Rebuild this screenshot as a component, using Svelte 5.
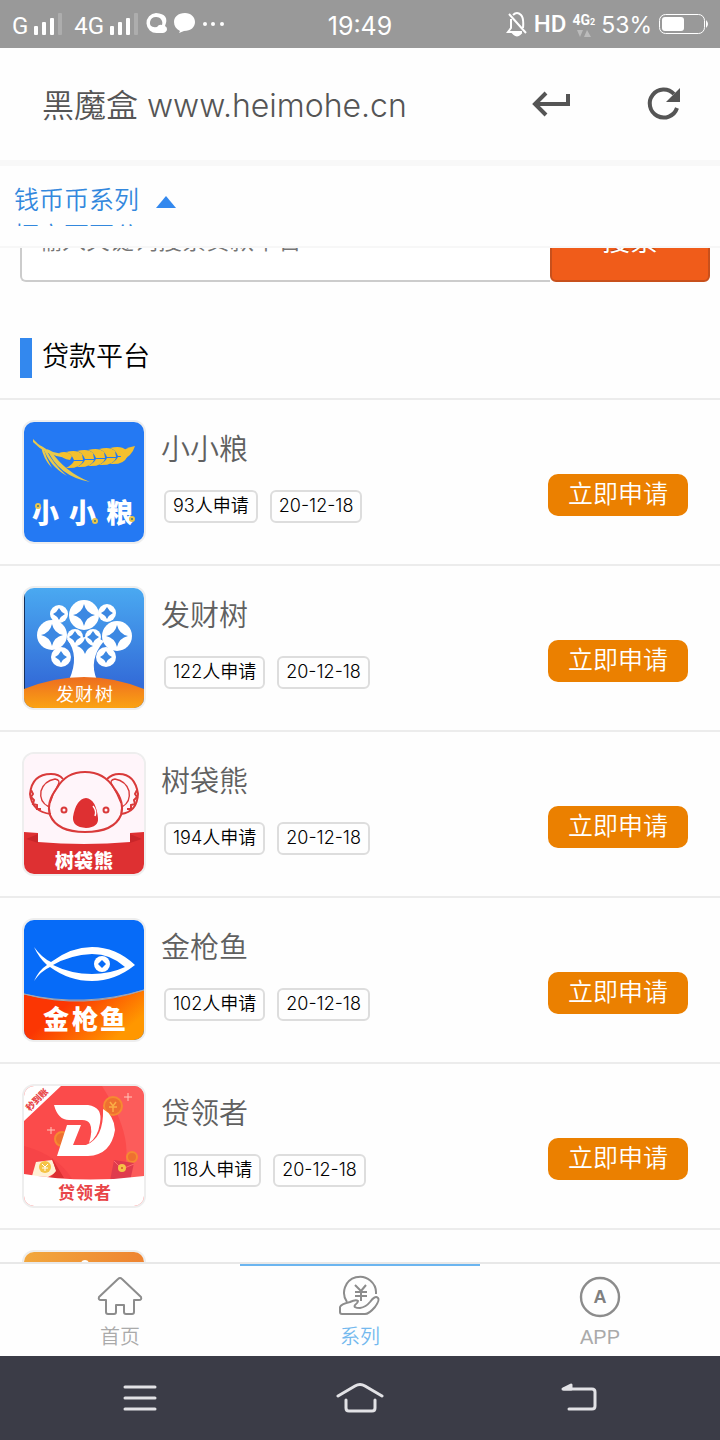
<script lang="ts">
  type Loan = { id: string; name: string; count: number; date: string };

  const loans: Loan[] = [
    { id: 'wheat', name: '小小粮', count: 93, date: '20-12-18' },
    { id: 'tree', name: '发财树', count: 122, date: '20-12-18' },
    { id: 'koala', name: '树袋熊', count: 194, date: '20-12-18' },
    { id: 'fish', name: '金枪鱼', count: 102, date: '20-12-18' },
    { id: 'leader', name: '贷领者', count: 118, date: '20-12-18' },
  ];

  const tabs = [
    { id: 'home', label: '首页' },
    { id: 'series', label: '系列' },
    { id: 'app', label: 'APP' },
  ];

  // x, y, radius, size of the hole
  const coins = [
    [60, 27, 15, 11],
    [35, 26, 9, 6],
    [83, 25, 9, 6],
    [28, 47, 15, 11],
    [93, 48, 15, 11],
    [37, 69, 10, 6],
    [82, 69, 10, 6],
    [51, 49, 8, 6],
    [69, 49, 8, 6],
    [61, 58, 9, 8],
  ];

  const grains = [0, 1, 2, 3, 4];

  let selectedTab = $state('series');
  let keyword = $state('');

  function diamond(x: number, y: number, s: number) {
    return `M${x} ${y - s}Q${x + 2} ${y - 2} ${x + s} ${y}Q${x + 2} ${y + 2} ${x} ${y + s}Q${x - 2} ${y + 2} ${x - s} ${y}Q${x - 2} ${y - 2} ${x} ${y - s}Z`;
  }
</script>

{#snippet signal()}
  <svg class="signal" viewBox="0 0 28 24" width="28" height="24" fill="#fff">
    <rect x="0" y="14" width="4" height="9" rx="1" />
    <rect x="8" y="10" width="4" height="13" rx="1" />
    <rect x="16" y="6" width="4" height="17" rx="1" />
    <rect x="24" y="1" width="4" height="22" rx="1" opacity="0.2" />
  </svg>
{/snippet}

{#snippet logo(id: string)}
  <svg class="logo" viewBox="0 0 120 120" width="120" height="120" aria-hidden="true">
    {#if id === 'wheat'}
      <rect width="120" height="120" fill="#2479f3" />
      <g fill="#e8c94c">
        <path d="M9 17Q19 29 38 32L42 36Q21 33 9 20Z" />
        <path d="M19 25Q25 44 43 54Q28 41 22 27Z" />
        <path d="M23 27Q34 54 66 60Q41 50 27 29Z" />
        <path d="M17 24Q19 37 28 46Q22 36 19 25Z" />
      </g>
      <g fill="#f3c02e">
        <path d="M35 31Q43 28 48 34L46 38Q38 37 35 31Z" />
        {#each grains as i}
          <path d="M0 0Q-3 -7 -8 -8Q3 -11 8 -6L9 0Z" transform="translate({50 + i * 11} {38 - i})" />
          <path d="M0 1H9Q6 9 -8 8Q-2 5 0 1Z" transform="translate({50 + i * 11} {38 - i})" />
        {/each}
        <path d="M96 32Q100 26 111 24Q108 34 98 38Z" />
      </g>
      <g class="heavy" font-size="27" fill="#fff">
        <text x="8" y="101">小</text>
        <text x="45" y="101">小</text>
        <text x="82" y="101">粮</text>
      </g>
      <g fill="#477" stroke="#e9c54b" stroke-width="2">
        <circle cx="14" cy="84" r="2" />
        <circle cx="71" cy="99" r="2" />
        <circle cx="108" cy="97" r="2" />
      </g>
    {:else if id === 'tree'}
      <defs>
        <linearGradient id="tree-sky" x2="0" y2="1">
          <stop stop-color="#4aa9f1" />
          <stop offset="0.8" stop-color="#336cd8" />
        </linearGradient>
        <linearGradient id="tree-hill" x2="0" y2="1">
          <stop stop-color="#ed6d20" />
          <stop offset="1" stop-color="#fba313" />
        </linearGradient>
      </defs>
      <rect width="120" height="120" fill="url(#tree-sky)" />
      <rect width="1" height="104" fill="#16315c" />
      <path d="M43 51L52 48Q54 58 61 60Q67 58 71 49L80 53Q64 72 73 92H45Q56 68 43 51Z" fill="#fff" />
      {#each coins as [x, y, r]}
        <circle cx={x} cy={y} {r} fill="#fff" />
      {/each}
      {#each coins as [x, y, , s]}
        <path d={diamond(x, y, s)} fill="#3c88e2" />
      {/each}
      <path d="M0 101Q60 77 120 101V120H0Z" fill="url(#tree-hill)" />
      <g class="regular" font-size="18" fill="#fff">
        <text x="32" y="113">发</text>
        <text x="51" y="113">财</text>
        <text x="71" y="113">树</text>
      </g>
    {:else if id === 'koala'}
      <rect width="120" height="120" fill="#fff5fa" />
      <g fill="none" stroke="#d93a3a" stroke-width="2">
        <path d="M27 60Q8 58 6 40Q8 20 27 20Q35 20 39 25" />
        <path d="M97 60Q113 58 114 40Q111 20 95 20Q88 20 83 25" />
        <path d="M25 53Q15 48 17 37Q20 27 31 25Q37 26 34 31Q29 39 26 49" stroke-width="1.4" />
        <path d="M98 53Q107 48 105 37Q102 27 91 25Q85 26 88 31Q93 39 97 49" stroke-width="1.4" />
        <path d="M61 18Q42 18 33 34Q22 48 26 61Q33 78 61 78Q90 78 97 61Q101 48 90 34Q80 18 61 18Z" />
        <path d="M7 36l2 4 -2 3 3 3 -1 4 4 1 0 4 4 0M113 36l-2 4 2 3 -3 3 1 4 -4 1 0 4 -4 0" />
        <circle cx="40" cy="56" r="2.5" />
        <circle cx="82" cy="56" r="2.5" />
      </g>
      <path d="M62 44Q72 45 74 64Q75 73 62 74Q48 73 49 63Q52 45 62 44Z" fill="#de3032" />
      <path d="M69 52Q73 57 71 62" fill="none" stroke="#fff" stroke-width="1.4" />
      <path d="M0 78L14 79V88Q60 92 106 88V79L120 78V120H0Z" fill="#de3032" />
      <path d="M14 80V89L2 85ZM106 80V89L118 85Z" fill="#c9262a" />
      <g class="heavy" font-size="19" fill="#fff">
        <text x="31" y="114">树</text>
        <text x="50" y="114">袋</text>
        <text x="70" y="114">熊</text>
      </g>
    {:else if id === 'fish'}
      <defs>
        <linearGradient id="fish-sea" x2="1" y2="0.5">
          <stop offset="0.4" stop-color="#fb3603" />
          <stop offset="1" stop-color="#ff9700" />
        </linearGradient>
      </defs>
      <rect width="120" height="120" fill="#066bf8" />
      <path d="M0 74Q60 90 120 70V120H0Z" fill="url(#fish-sea)" />
      <path d="M0 74Q60 90 120 70Q60 88 0 74Z" fill="none" stroke="#a6a5ad" />
      <path
        d="M10 27Q18 38 27 42Q47 27 68 27Q92 27 111 45Q91 61 68 61Q45 61 26 47Q17 51 10 61Q15 50 23 45Q15 38 10 27ZM29 45Q47 54 68 54Q86 54 101 47Q87 34 68 34Q46 35 29 45Z"
        fill="#fff"
        fill-rule="evenodd"
      />
      <circle cx="78" cy="44" r="8" fill="#fff" />
      <path d="M78 40L82 44L78 48L74 44Z" fill="#066bf8" />
      <g class="heavy" font-size="26" fill="#fff">
        <text x="19" y="109">金</text>
        <text x="48" y="109">枪</text>
        <text x="76" y="109">鱼</text>
      </g>
    {:else if id === 'leader'}
      <rect width="120" height="120" fill="#fb4b4b" />
      <path d="M78 0H120V100H90Q120 66 78 0Z" fill="#fc5c5b" />
      <path d="M0 60Q38 70 52 100H0Z" fill="#f64447" />
      <g fill="#ee7030" stroke="#f68a32" stroke-width="2">
        <circle cx="89" cy="20" r="9" />
        <circle cx="38" cy="53" r="7" />
        <circle cx="108" cy="71" r="5" />
      </g>
      <path d="M86 16l3 4 3 -4M85 21h8M89 20v6" stroke="#fbad45" stroke-width="1.5" fill="none" />
      <path d="M104 7v8M100 11h8M27 41v7M23 44h8" stroke="#ffc9bd" />
      <g fill="#fff">
        <path d="M30 19H64Q79 21 76 37Q74 51 65 57Q69 44 66 38Q64 34 58 34H45Q34 34 30 19Z" />
        <path d="M43 39H57L49 59H62Q80 52 79 23Q90 29 91 44Q87 69 64 70H33Z" />
      </g>
      <path d="M12 76L28 74L33 86L24 91L8 90Z" fill="#fff1d5" />
      <path d="M28 72L40 92H26L32 85Z" fill="#dc3032" />
      <circle cx="21" cy="81" r="6" fill="#f5c345" />
      <path d="M18 78l3 3 3 -3M18 82h6M21 81v4" stroke="#fff" fill="none" />
      <path d="M90 74L110 77L106 95H86Z" fill="#df3b4d" />
      <path d="M90 75L98 83L110 78" fill="none" stroke="#ff6870" />
      <circle cx="98" cy="82" r="4" fill="#f6c247" />
      <circle cx="98" cy="82" r="1" fill="#d6572d" />
      <path d="M0 88Q60 98 120 90V120H0ZM0 0H37L0 35Z" fill="#fff" />
      <text class="heavy" x="-14" y="22" font-size="9" fill="#e84548" transform="rotate(-45)">秒到账</text>
      <g class="bold" font-size="17" fill="#e84548">
        <text x="34" y="113">贷</text>
        <text x="52" y="113">领</text>
        <text x="70" y="113">者</text>
      </g>
    {:else}
      <defs>
        <linearGradient id="more-bg" x2="1" y2="0.3">
          <stop stop-color="#f2a83e" />
          <stop offset="1" stop-color="#ee8130" />
        </linearGradient>
      </defs>
      <rect width="120" height="120" fill="url(#more-bg)" />
      <circle cx="61" cy="12" r="4" fill="#fff" />
    {/if}
  </svg>
{/snippet}

<div class="screen">
  <header class="status">
    <div class="status-side">
      <span>G</span>
      {@render signal()}
      <span class="network">4G</span>
      {@render signal()}
      <svg class="notices" viewBox="0 0 80 24" width="80" height="24" fill="#fff">
        <path
          fill-rule="evenodd"
          d="M10 1A10 10 0 1 0 11 21H17Q21 20 21 17Q21 15 19 14Q24 2 10 1ZM10 5A6 6 0 0 1 16 13Q13 12 11 15Q3 16 4 10Q5 5 10 5Z"
        />
        <path d="M39 1C32 1 28 5 28 10C28 14 30 17 34 19L33 21L38 19C45 19 49 15 49 10C49 5 45 1 39 1Z" />
        <circle cx="59" cy="12" r="2" />
        <circle cx="67" cy="12" r="2" />
        <circle cx="76" cy="12" r="2" />
      </svg>
    </div>
    <time>19:49</time>
    <div class="status-side end">
      <svg viewBox="0 0 22 26" width="22" height="26" fill="none" stroke="#fff" stroke-width="2">
        <path d="M5 8V17L2 21H16M7 4Q11 0 15 4Q18 7 17 17M3 3L20 22" />
        <path d="M8 23Q11 26 14 23Z" fill="#fff" />
      </svg>
      <span class="hd">HD</span>
      <span class="sim">
        <span class="sim-name">4G<small>2</small></span>
        <svg viewBox="0 0 14 7" width="14" height="7" fill="#bbb"><path d="M0 0H6L3 7ZM7 7H14L10 0Z" /></svg>
      </span>
      <span class="percent">53%</span>
      <svg viewBox="0 0 50 22" width="50" height="22" fill="#fff">
        <rect x="1.5" y="1.5" width="45" height="19" rx="6" fill="none" stroke="#fff" />
        <rect x="4" y="4" width="22" height="14" rx="3" />
        <path d="M48 7Q50 9 50 11T48 15Z" />
      </svg>
    </div>
  </header>

  <div class="browser">
    <h1>黑魔盒 www.heimohe.cn</h1>
    <button aria-label="返回">
      <svg viewBox="0 0 40 40" width="40" height="40" fill="none" stroke="#555" stroke-width="4">
        <path d="M36 10V20H4M14 9L3 20L14 31" />
      </svg>
    </button>
    <button aria-label="刷新">
      <svg viewBox="0 0 40 40" width="40" height="40">
        <path d="M30 10A14 14 0 1 0 33 24" fill="none" stroke="#555" stroke-width="4" />
        <path d="M36 4V18H22Z" fill="#555" />
      </svg>
    </button>
  </div>

  <div class="series">
    <button class="series-button">
      <span class="series-names">钱币币系列<br />恒立百百分</span>
      <svg viewBox="0 0 20 12" width="20" height="12"><path d="M10 0L20 12H0Z" fill="#3388ee" /></svg>
    </button>
  </div>

  <main>
    <form class="search" onsubmit={(e) => e.preventDefault()}>
      <input type="text" aria-label="搜索" placeholder="输入关键词搜索贷款平台" bind:value={keyword} />
      <button>搜索</button>
    </form>

    <h2>贷款平台</h2>

    <ul class="loans">
      {#each loans as loan (loan.id)}
        <li>
          {@render logo(loan.id)}
          <div class="info">
            <h3>{loan.name}</h3>
            <div class="tags">
              <span>{loan.count}人申请</span>
              <span>{loan.date}</span>
            </div>
          </div>
          <button class="apply">立即申请</button>
        </li>
      {/each}
      <li>{@render logo('more')}</li>
    </ul>
  </main>

  <nav class="tabs">
    {#each tabs as { id, label }}
      <button class="tab" data-selected={selectedTab === id} onclick={() => (selectedTab = id)}>
        <svg viewBox="0 0 48 44" width="48" height="44" fill="none" stroke="#8c8c8c" stroke-width="2" stroke-linejoin="round">
          {#if id === 'home'}
            <path d="M22 4Q24 2 26 4L45 22Q46 25 43 25H38V37Q38 39 36 39H30Q28 39 28 37V30H20V37Q20 39 18 39H12Q10 39 10 37V25H5Q2 25 3 22Z" />
          {:else if id === 'series'}
            <path d="M11 27A16 16 0 1 1 40 19M19 10L25 16L30 10M25 16V26M19 17H31M19 21H31" />
            <path fill="#fefefe" d="M4 37V32Q5 29 14 27Q20 24 22 26Q22 28 19 30Q17 33 24 33Q30 32 34 27Q39 20 42 23Q44 25 39 32Q33 39 29 39H6Q4 39 4 37Z" />
          {:else}
            <circle cx="24" cy="22" r="19" stroke-width="2.4" />
            <text class="bold" x="24" y="28" text-anchor="middle" font-size="18" stroke="none" fill="#808080">A</text>
          {/if}
        </svg>
        <span>{label}</span>
      </button>
    {/each}
  </nav>

  <footer class="system">
    <button aria-label="菜单">
      <svg viewBox="0 0 48 32" width="48" height="32">
        <path d="M9 5H39M9 16H39M9 27H39" />
      </svg>
    </button>
    <button aria-label="主页">
      <svg viewBox="0 0 48 32" width="48" height="32">
        <path d="M2 14L19 4Q24 1 29 4L46 14M10 18V26Q10 29 13 29H36Q39 29 39 26V18" />
      </svg>
    </button>
    <button aria-label="后退">
      <svg viewBox="0 0 48 32" width="48" height="32">
        <path d="M8 7H36Q39 7 39 10V24Q39 27 36 27H13" />
        <path d="M7 7L15 3V7Z" />
      </svg>
    </button>
  </footer>
</div>

<style>
  :global(body) {
    margin: 0;
  }

  .screen {
    display: flex;
    flex-direction: column;
    height: 100vh;
    overflow: hidden;
    background: #fefefe;
    color: #000;
    font-family: 'Noto Sans CJK SC', sans-serif;
    font-weight: 350;
  }
  svg {
    display: block;
    flex-shrink: 0;
  }
  button {
    padding: 0;
    border: 0;
    background: none;
    color: inherit;
    font: inherit;
    cursor: pointer;
  }

  .status {
    display: flex;
    flex-shrink: 0;
    align-items: center;
    height: 48px;
    padding: 0 12px;
    background: #999;
    color: #fff;
    font: 400 24px/32px Roboto, sans-serif;
  }
  .status time {
    font: 400 25px/32px Inter, sans-serif;
    padding-top: 4px;
  }
  .status-side {
    display: flex;
    flex: 1;
    align-items: center;
    padding-top: 4px;
  }
  .signal {
    margin: -4px 0 0 6px;
  }
  .network {
    margin-left: 12px;
  }
  .notices {
    margin: -4px 0 0 8px;
  }
  .end {
    justify-content: flex-end;
    gap: 6px;
    padding-top: 0;
  }
  .hd {
    font-weight: 500;
  }
  .sim {
    display: flex;
    flex-direction: column;
    align-items: center;
  }
  .sim-name {
    font-size: 14px;
    font-weight: 700;
    line-height: 16px;
  }
  .sim small {
    font-size: 9px;
  }
  .percent {
    padding-top: 2px;
    font: 400 23px/32px Inter, sans-serif;
  }

  .browser {
    display: flex;
    flex-shrink: 0;
    align-items: center;
    height: 112px;
    padding: 0 36px 0 42px;
    border-bottom: 6px solid #f8f8f8;
  }
  .browser h1 {
    flex: 1;
    margin: 0;
    padding-top: 4px;
    color: #555;
    font: 350 32px/48px Inter, 'Noto Sans CJK SC', sans-serif;
  }
  .browser button + button {
    margin-left: 72px;
  }

  .series {
    flex-shrink: 0;
    height: 80px;
    border-bottom: 2px solid #f7f7f7;
  }
  .series-button {
    display: flex;
    align-items: center;
    gap: 17px;
    height: 60px;
    padding: 0 14px;
    overflow: hidden;
    color: #3388dd;
    text-align: left;
  }
  .series-names {
    align-self: flex-start;
    padding-top: 14px;
    font-size: 25px;
    line-height: 36px;
  }
  .series-button svg {
    margin-top: 12px;
  }

  main {
    flex: 1;
    min-height: 0;
    overflow: hidden;
  }
  .search {
    display: flex;
    margin: -46px 10px 0 20px;
  }
  .search input {
    flex: 1;
    min-width: 0;
    box-sizing: border-box;
    height: 80px;
    padding: 0 16px 8px;
    border: 2px solid #ccc;
    border-right: 0;
    border-radius: 6px 0 0 6px;
    background: #fff;
    font: 350 24px/36px 'Noto Sans CJK SC', sans-serif;
  }
  .search input::placeholder {
    color: #757575;
  }
  .search button {
    width: 160px;
    padding-bottom: 6px;
    border: 2px solid #c8501c;
    border-radius: 6px;
    background: #f05c1a;
    color: #fff;
    font-size: 28px;
    font-weight: 400;
    text-shadow: 0 -1px 1px #a63c10;
  }

  h2 {
    margin: 56px 20px 20px;
    padding: 0 0 6px 10px;
    border-left: 12px solid #3388ee;
    font-size: 27px;
    font-weight: 350;
    line-height: 34px;
  }

  .loans {
    margin: 0;
    padding: 0;
    list-style: none;
  }
  .loans li {
    display: flex;
    align-items: flex-start;
    padding: 20px 32px 20px 22px;
    border-top: 2px solid #ececec;
  }
  .logo {
    border: 2px solid #eee;
    border-radius: 12px;
  }
  .heavy {
    font-weight: 900;
  }
  .bold {
    font-weight: 700;
  }
  .regular {
    font-weight: 400;
  }
  .info {
    flex: 1;
    padding-left: 15px;
  }
  .info h3 {
    margin: 7px 0 23px;
    color: #606060;
    font-size: 29px;
    font-weight: 350;
    line-height: 40px;
  }
  .tags {
    display: flex;
    gap: 12px;
    padding-left: 3px;
  }
  .tags span {
    padding: 0 7px 2px;
    border: 2px solid #ddd;
    border-radius: 6px;
    font-family: Inter, 'Noto Sans CJK SC', sans-serif;
    font-size: 18px;
    line-height: 27px;
  }
  .apply {
    width: 140px;
    height: 42px;
    margin-top: 54px;
    padding-bottom: 6px;
    border-radius: 10px;
    background: #eb8000;
    color: #fff;
    font-size: 25px;
    line-height: 36px;
  }

  .tabs {
    display: flex;
    flex-shrink: 0;
    border-top: 2px solid #e8e8e8;
  }
  .tab {
    display: flex;
    flex: 1;
    flex-direction: column;
    align-items: center;
    padding: 9px 0 1px;
    border-top: 2px solid transparent;
    color: #aaa;
    font: 350 20px/36px 'Liberation Sans', 'Noto Sans CJK SC', sans-serif;
  }
  .tab[data-selected='true'] {
    border-color: #6bb5f0;
    color: #74b9ee;
  }

  .system {
    display: flex;
    flex-shrink: 0;
    height: 84px;
    padding: 0 30px;
    background: #3b3c47;
  }
  .system button {
    display: flex;
    flex: 1;
    align-items: center;
    justify-content: center;
  }
  .system svg {
    fill: none;
    stroke: #e2e2e6;
    stroke-linecap: round;
    stroke-linejoin: round;
    stroke-width: 3;
  }
</style>
